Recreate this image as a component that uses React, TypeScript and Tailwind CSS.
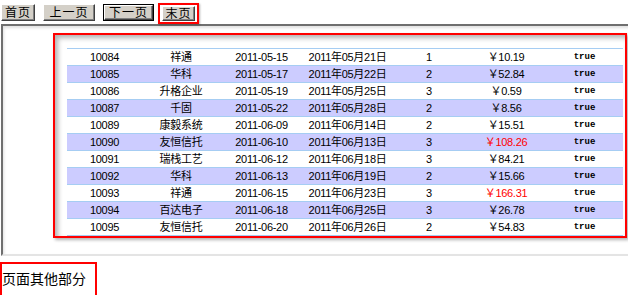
import React from "react";

type Row = [string, string, string, string, string, string, boolean];

const rows: Row[] = [
  ["10084", "祥通", "2011-05-15", "2011年05月21日", "1", "10.19", false],
  ["10085", "华科", "2011-05-17", "2011年05月22日", "2", "52.84", false],
  ["10086", "升格企业", "2011-05-19", "2011年05月25日", "3", "0.59", false],
  ["10087", "千固", "2011-05-22", "2011年05月28日", "2", "8.56", false],
  ["10089", "康毅系统", "2011-06-09", "2011年06月14日", "2", "15.51", false],
  ["10090", "友恒信托", "2011-06-10", "2011年06月13日", "3", "108.26", true],
  ["10091", "瑞栈工艺", "2011-06-12", "2011年06月18日", "3", "84.21", false],
  ["10092", "华科", "2011-06-13", "2011年06月19日", "2", "15.66", false],
  ["10093", "祥通", "2011-06-15", "2011年06月23日", "3", "166.31", true],
  ["10094", "百达电子", "2011-06-18", "2011年06月25日", "3", "26.78", false],
  ["10095", "友恒信托", "2011-06-20", "2011年06月26日", "2", "54.83", false],
];

const font = { fontFamily: '"Liberation Sans", "Noto Sans CJK SC", sans-serif' };

function Btn({ label, w, def }: { label: string; w: string; def?: boolean }) {
  const inner = (
    <div className="flex items-center justify-center h-full bg-[#d4d0c8] border border-t-white border-l-white border-b-[#404040] border-r-[#404040] shadow-[inset_-1px_-1px_0_#808080] text-[12px] leading-none text-black tracking-[1px]">
      {label}
    </div>
  );
  if (def) {
    return <div className={`${w} h-[17px] border border-black`}>{inner}</div>;
  }
  return <div className={`${w} h-[17px]`}>{inner}</div>;
}

export default function App() {
  return (
    <div className="w-[628px] h-[295px] overflow-hidden bg-white text-black" style={font}>
      <div className="flex items-start h-[24px]">
        <div className="ml-[1px] mt-[4px]">
          <Btn label="首页" w="w-[34px]" />
        </div>
        <div className="ml-[8px] mt-[4px]">
          <Btn label="上一页" w="w-[52px]" />
        </div>
        <div className="ml-[8px] mt-[4px]">
          <Btn label="下一页" w="w-[51px]" def />
        </div>
        <div className="ml-[4px] mt-[3px] w-[41px] h-[21px] border-2 border-[#ff0000] px-[2px] py-[1px] shadow-[1px_1px_2px_rgba(0,0,0,0.3)]">
          <div className="flex items-center justify-center h-[15px] bg-[#d4d0c8] border border-t-white border-l-white border-b-[#404040] border-r-[#404040] shadow-[inset_-1px_-1px_0_#808080] text-[12px] leading-none tracking-[1px]">
            末页
          </div>
        </div>
      </div>

      <div className="ml-[1px] w-[660px] h-[232px] border-2 border-t-[#6f6f6f] border-l-[#6f6f6f] border-b-[#e4e4e4] border-r-[#e4e4e4] shadow-[inset_1px_2px_3px_rgba(0,0,0,0.12)] pt-[7px] pl-[50px]">
        <div className="w-[574px] h-[205px] border-2 border-[#ff0000] pl-[12px] pt-[13px] pr-[2px] bg-white shadow-[inset_3px_3px_5px_rgba(0,0,0,0.3),2px_2px_3px_rgba(0,0,0,0.3)]">
          <table className="w-[556px] table-fixed border-collapse text-[11px] tracking-[-0.3px]">
            <colgroup>
              <col className="w-[75px]" />
              <col className="w-[78px]" />
              <col className="w-[83px]" />
              <col className="w-[89px]" />
              <col className="w-[74px]" />
              <col className="w-[80px]" />
              <col className="w-[77px]" />
            </colgroup>
            <tbody>
              {rows.map((r, i) => (
                <tr
                  key={r[0]}
                  className={`h-[17px] border-t border-b border-[#a6cdf3] ${i % 2 === 1 ? "bg-[#ccccff]" : "bg-white"}`}
                >
                  <td className="p-0 text-center leading-[16px]">{r[0]}</td>
                  <td className="p-0 text-center leading-[16px]">{r[1]}</td>
                  <td className="p-0 text-center leading-[16px]">{r[2]}</td>
                  <td className="p-0 text-center leading-[16px]">{r[3]}</td>
                  <td className="p-0 text-center leading-[16px]">{r[4]}</td>
                  <td className={`p-0 text-center leading-[16px] ${r[6] ? "text-[#ff0000]" : ""}`}>
                    ￥{r[5]}
                  </td>
                  <td
                    className="p-0 text-center leading-[16px] text-[9px] font-bold tracking-normal"
                    style={{ fontFamily: '"Liberation Mono", monospace' }}
                  >
                    true
                  </td>
                </tr>
              ))}
            </tbody>
          </table>
        </div>
      </div>

      <div className="mt-[6px] w-[97px] h-[40px] border-2 border-[#ff0000] pt-[5px]">
        <div className="text-[14px] leading-[20px]">页面其他部分</div>
      </div>
    </div>
  );
}
